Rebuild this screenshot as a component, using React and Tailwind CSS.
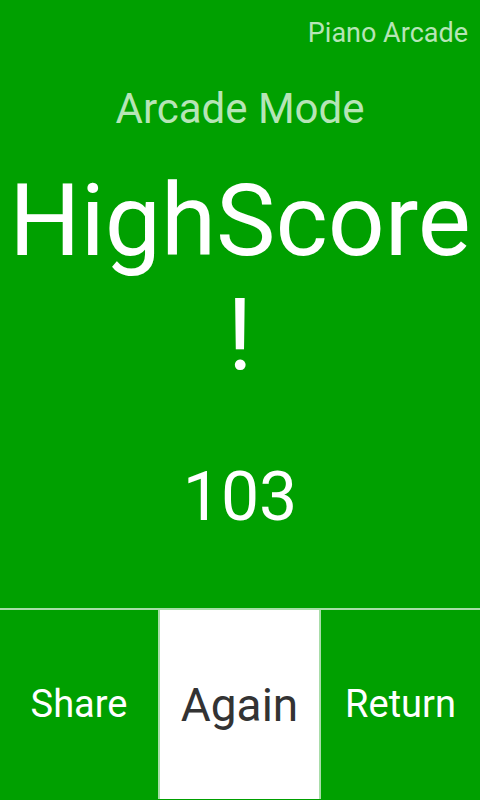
import React from "react";

export default function App() {
  return (
    <div
      className="w-[480px] h-[800px] bg-[#00a000] flex flex-col overflow-hidden"
      style={{ fontFamily: "Roboto, 'Noto Sans', sans-serif" }}
    >
      <div className="h-[608px] flex flex-col">
        <div className="pt-[18px] pr-[12px] text-right text-[27px] leading-[31px] text-[#b6e5b6]">
          Piano Arcade
        </div>
        <div className="mt-[35px] text-center text-[42px] leading-[50px] text-[#b6e5b6]">
          Arcade Mode
        </div>
        <div className="mt-[30px] text-center text-[100px] leading-[114px] text-white">
          <div className="whitespace-nowrap">HighScore</div>
          <div>!</div>
        </div>
        <div className="mt-[65px] text-center text-[68px] leading-[80px] text-white">
          103
        </div>
      </div>
      <div className="h-[2px] bg-[#a8dda8]" />
      <div className="flex-1 flex mb-[1px]">
        <button className="w-[158px] flex items-center justify-center text-[38px] leading-[45px] text-white">
          Share
        </button>
        <div className="w-[2px] bg-[#a8dda8]" />
        <button className="w-[159px] bg-white flex items-center justify-center text-[46px] leading-[54px] text-[#333333]">
          Again
        </button>
        <div className="w-[2px] bg-[#a8dda8]" />
        <button className="flex-1 flex items-center justify-center text-[38px] leading-[45px] text-white">
          Return
        </button>
      </div>
    </div>
  );
}
